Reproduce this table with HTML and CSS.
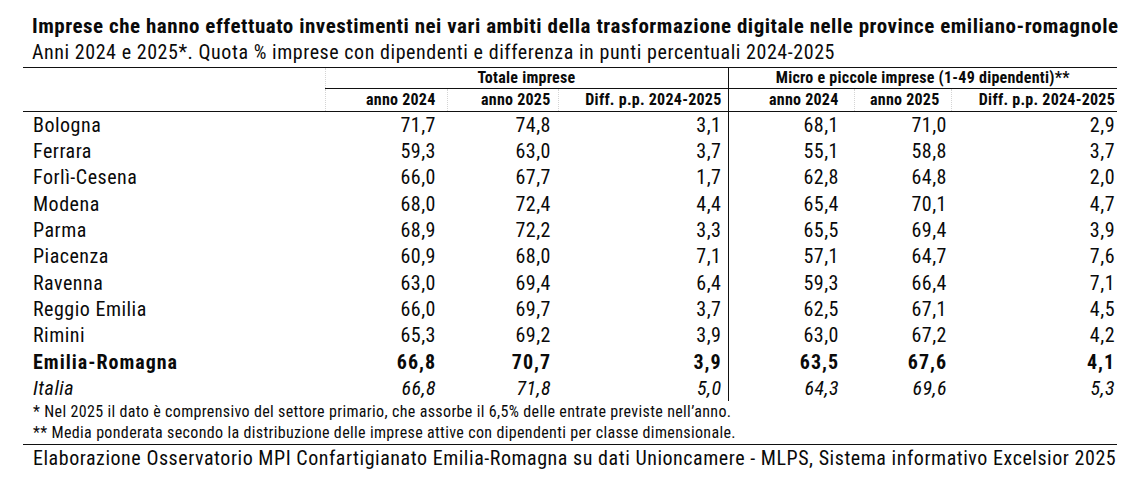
FILE: index.html
```html
<!DOCTYPE html>
<html lang="it">
<head>
<meta charset="utf-8">
<link rel="stylesheet" href="styles.css">
</head>
<body>
<div class="sheet">
  <div class="title">Imprese che hanno effettuato investimenti nei vari ambiti della trasformazione digitale nelle province emiliano-romagnole</div>
  <div class="subtitle">Anni 2024 e 2025*. Quota % imprese con dipendenti e differenza in punti percentuali 2024-2025</div>
  <table class="data">
    <colgroup>
      <col class="c-name"><col class="c1"><col class="c2"><col class="c3"><col class="c4"><col class="c5"><col class="c6">
    </colgroup>
    <thead>
      <tr class="grp">
        <th></th>
        <th colspan="3" class="g1 dot">Totale imprese</th>
        <th colspan="3" class="g2">Micro e piccole imprese (1-49 dipendenti)**</th>
      </tr>
      <tr class="sub">
        <th></th>
        <th class="p1 dot">anno 2024</th>
        <th class="p2 dot">anno 2025</th>
        <th class="p3 dot">Diff. p.p. 2024-2025</th>
        <th class="p4 sep">anno 2024</th>
        <th class="p5h dot">anno 2025</th>
        <th class="p6 dot">Diff. p.p. 2024-2025</th>
      </tr>
    </thead>
    <tbody>
      <tr><td class="name">Bologna</td><td class="p1">71,7</td><td class="p2">74,8</td><td class="p3">3,1</td><td class="p4 sep">68,1</td><td class="p5">71,0</td><td class="p6">2,9</td></tr>
      <tr><td class="name">Ferrara</td><td class="p1">59,3</td><td class="p2">63,0</td><td class="p3">3,7</td><td class="p4 sep">55,1</td><td class="p5">58,8</td><td class="p6">3,7</td></tr>
      <tr><td class="name">Forlì-Cesena</td><td class="p1">66,0</td><td class="p2">67,7</td><td class="p3">1,7</td><td class="p4 sep">62,8</td><td class="p5">64,8</td><td class="p6">2,0</td></tr>
      <tr><td class="name">Modena</td><td class="p1">68,0</td><td class="p2">72,4</td><td class="p3">4,4</td><td class="p4 sep">65,4</td><td class="p5">70,1</td><td class="p6">4,7</td></tr>
      <tr><td class="name">Parma</td><td class="p1">68,9</td><td class="p2">72,2</td><td class="p3">3,3</td><td class="p4 sep">65,5</td><td class="p5">69,4</td><td class="p6">3,9</td></tr>
      <tr><td class="name">Piacenza</td><td class="p1">60,9</td><td class="p2">68,0</td><td class="p3">7,1</td><td class="p4 sep">57,1</td><td class="p5">64,7</td><td class="p6">7,6</td></tr>
      <tr><td class="name">Ravenna</td><td class="p1">63,0</td><td class="p2">69,4</td><td class="p3">6,4</td><td class="p4 sep">59,3</td><td class="p5">66,4</td><td class="p6">7,1</td></tr>
      <tr><td class="name">Reggio Emilia</td><td class="p1">66,0</td><td class="p2">69,7</td><td class="p3">3,7</td><td class="p4 sep">62,5</td><td class="p5">67,1</td><td class="p6">4,5</td></tr>
      <tr><td class="name">Rimini</td><td class="p1">65,3</td><td class="p2">69,2</td><td class="p3">3,9</td><td class="p4 sep">63,0</td><td class="p5">67,2</td><td class="p6">4,2</td></tr>
      <tr class="region"><td class="name">Emilia-Romagna</td><td class="p1">66,8</td><td class="p2">70,7</td><td class="p3">3,9</td><td class="p4 sep">63,5</td><td class="p5">67,6</td><td class="p6">4,1</td></tr>
      <tr class="italy"><td class="name">Italia</td><td class="p1">66,8</td><td class="p2">71,8</td><td class="p3">5,0</td><td class="p4 sep">64,3</td><td class="p5">69,6</td><td class="p6">5,3</td></tr>
    </tbody>
  </table>
  <div class="notes">
    <div class="note">* Nel 2025 il dato è comprensivo del settore primario, che assorbe il 6,5% delle entrate previste nell’anno.</div>
    <div class="note">** Media ponderata secondo la distribuzione delle imprese attive con dipendenti per classe dimensionale.</div>
  </div>
  <div class="source">Elaborazione Osservatorio MPI Confartigianato Emilia-Romagna su dati Unioncamere - MLPS, Sistema informativo Excelsior 2025</div>
</div>
</body>
</html>
```

FILE: styles.css
```css
html, body {
  margin: 0;
  padding: 0;
  background: #ffffff;
}
body {
  font-family: "Roboto", "Liberation Sans", sans-serif;
  font-stretch: 75%;
  color: #0a0a0a;
}
.sheet {
  margin: 14px 0 0 23px;
  width: 1094px;
}
.title {
  padding-left: 9px;
  font-weight: bold;
  font-size: 21px;
  letter-spacing: 0.52px;
  line-height: 24px;
  white-space: nowrap;
}
.subtitle {
  padding-left: 9px;
  font-size: 20px;
  letter-spacing: 0.55px;
  line-height: 29px;
  height: 30px;
  border-bottom: 1.5px solid #111;
  box-sizing: border-box;
  white-space: nowrap;
}
.data {
  border-collapse: collapse;
  width: 1094px;
  table-layout: fixed;
}
.c-name { width: 302px; }
.c1 { width: 122px; }
.c2 { width: 111px; }
.c3 { width: 170px; }
.c4 { width: 126px; }
.c5 { width: 97px; }
.c6 { width: 166px; }
.data th, .data td {
  padding: 0;
  white-space: nowrap;
}
.grp th {
  font-size: 16px;
  letter-spacing: 0.25px;
  font-weight: bold;
  height: 20px;
  line-height: 20px;
  text-align: center;
  border-bottom: 1px solid #111;
}
.grp th:first-child { border-bottom: none; }
.grp .g2 { border-left: 1px solid #111; }
.sub th {
  font-size: 16px;
  letter-spacing: 0.25px;
  font-weight: bold;
  height: 22px;
  line-height: 22px;
  text-align: right;
  border-bottom: 1.5px solid #111;
}
.dot { border-left: 1px dotted #d4d4d4; }
.sep { border-left: 1px solid #111; }
.data tbody tr {
  height: 26.3px;
}
.data td {
  font-size: 20px;
  letter-spacing: 0.5px;
  line-height: 26px;
  text-align: right;
}
.data td.name {
  text-align: left;
  padding-left: 10px;
}
.p1 { padding-right: 11px !important; }
.p2 { padding-right: 7px !important; }
.p3 { padding-right: 6px !important; }
.p4 { padding-right: 15px !important; }
.p5 { padding-right: 4px !important; }
.p5h { padding-right: 11px !important; }
.p6 { padding-right: 2px !important; }
.region td { font-weight: bold; letter-spacing: 1px; }
.italy td { font-style: italic; }
.notes {
  border-bottom: 1.5px solid #111;
  padding: 0 0 1px 10px;
}
.note {
  font-size: 16px;
  letter-spacing: 0.35px;
  line-height: 21px;
  white-space: nowrap;
}
.source {
  padding-left: 10px;
  font-size: 20px;
  letter-spacing: 0.54px;
  line-height: 26px;
  white-space: nowrap;
}
```
